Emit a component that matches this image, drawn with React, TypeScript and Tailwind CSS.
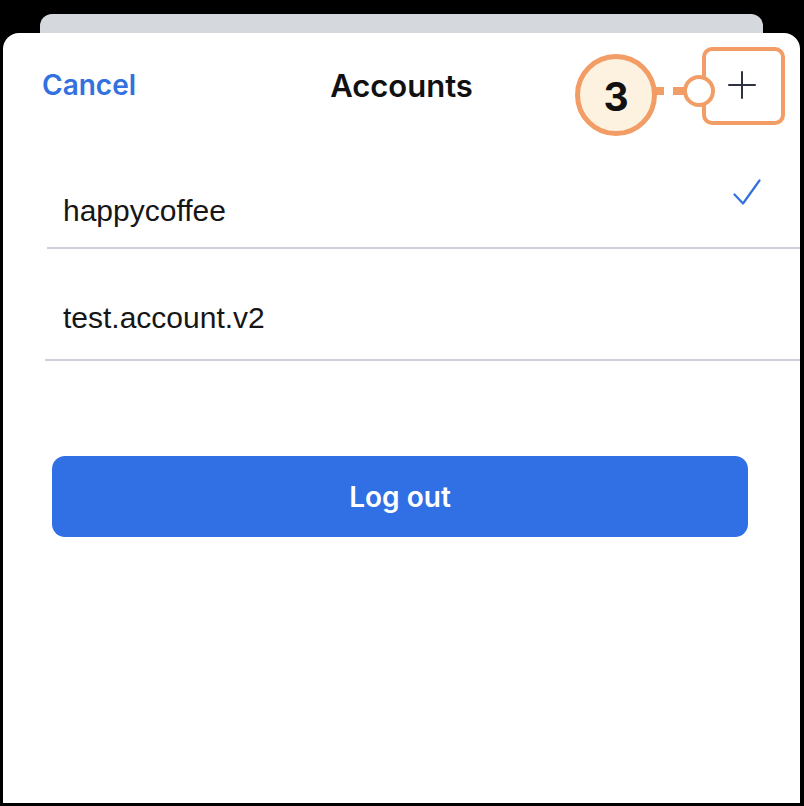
import React from 'react'

const accounts = [
    { name: 'happycoffee', selected: true, pb: 'pb-[21px]', line: 'ml-[44px] pl-[16px]' },
    { name: 'test.account.v2', selected: false, pb: 'pb-[26px]', line: 'ml-[42px] pl-[18px]' },
]

const Check = () => (
    <svg width="28" height="26" viewBox="0 0 28 26" fill="none">
        <path d="M1.5 15.5 L10 24.5 L26.5 1.5" stroke="#3370e0" strokeWidth="2.2" strokeLinecap="round" strokeLinejoin="round" />
    </svg>
)

const Plus = () => (
    <svg width="28" height="28" viewBox="0 0 28 28" fill="none">
        <path d="M14 1 V27 M1 14 H27" stroke="#2c3242" strokeWidth="2" strokeLinecap="round" />
    </svg>
)

const Callout = () => (
    <>
        <div className="absolute left-[702px] top-[47px] w-[83px] h-[78px] rounded-[10px] border-[4px] border-[#f29d66]" />
        <div className="absolute left-[656px] top-[87px] w-[8px] h-[8px] bg-[#f29d66]" />
        <div className="absolute left-[673px] top-[87px] w-[14px] h-[8px] bg-[#f29d66]" />
        <div className="absolute left-[683px] top-[75px] w-[32px] h-[32px] rounded-full border-[4px] border-[#f29d66] bg-white" />
        <div className="absolute left-[575px] top-[54px] w-[82px] h-[82px] rounded-full border-[5px] border-[#f29d66] bg-[#fdf1e0] flex items-center justify-center">
            <span className="text-[39px] leading-none font-bold text-[#111] font-['Inter',sans-serif] mt-[2px]">3</span>
        </div>
    </>
)

export default function App() {
    return (
        <div className="relative w-[804px] h-[806px] bg-black pl-[3px] pr-[4px] pt-[14px] pb-[3px] flex flex-col overflow-hidden">
            <div className="mx-[37px] h-[19px] rounded-t-[12px] bg-[#d5d8dd] shrink-0" />
            <div className="flex-1 bg-white rounded-t-[16px] flex flex-col">
                <div className="grid grid-cols-[1fr_auto_1fr] items-center h-[104px] px-[39px] font-['Inter',sans-serif]">
                    <span className="justify-self-start text-[28px] leading-none font-semibold text-[#3370e0]">Cancel</span>
                    <span className="text-[31px] leading-none font-semibold text-[#111]">Accounts</span>
                    <span className="justify-self-end mr-[5px] flex"><Plus /></span>
                </div>
                {accounts.map((a) => (
                    <div key={a.name} className={`${a.line} flex justify-between border-b-2 border-[#cdcfda] h-[112px] pr-[39px]`}>
                        <span className={`self-end ${a.pb} text-[30px] leading-none text-[#161616] font-['Liberation_Sans',Arial,sans-serif]`}>{a.name}</span>
                        {a.selected && <span className="self-start mt-[42px] flex"><Check /></span>}
                    </div>
                ))}
                <button className="mt-[95px] ml-[49px] w-[696px] h-[81px] rounded-[13px] bg-[#3170e4] text-white text-[28px] leading-none font-semibold font-['Inter',sans-serif]">
                    Log out
                </button>
            </div>
            <Callout />
        </div>
    )
}
